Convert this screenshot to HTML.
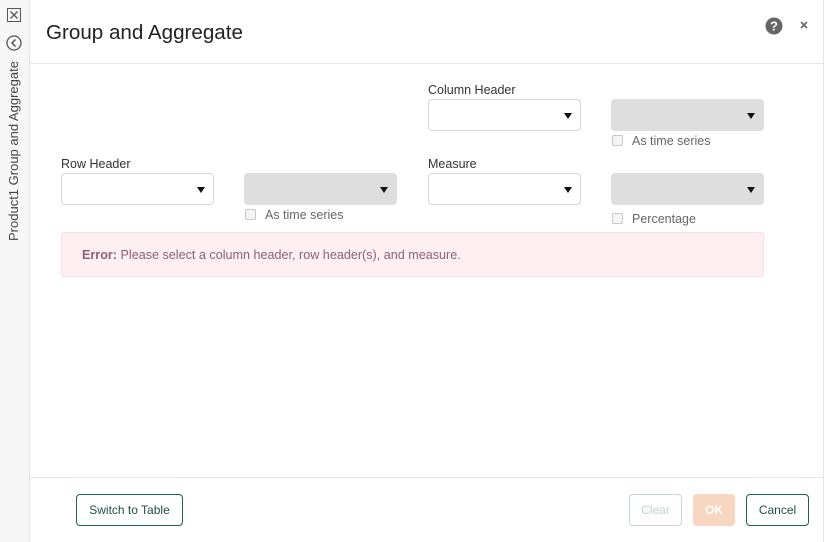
<!DOCTYPE html><html><head><style>
*{box-sizing:border-box;margin:0;padding:0}
body{width:830px;height:542px;position:relative;background:#fff;font-family:"Liberation Sans",sans-serif;overflow:hidden;color:#333}
.a{position:absolute}
.sel{position:absolute;width:153px;height:32px;border:1px solid #d6d6d6;border-radius:4px;background:#fff}
.sel.g{background:#dedede;border-color:#dedede}
.sel:after{content:"";position:absolute;right:8px;top:13px;border-left:4.5px solid transparent;border-right:4.5px solid transparent;border-top:6px solid #111}
.lbl{position:absolute;font-size:12.5px;color:#333}
.cb{position:absolute;width:11px;height:11px;border:1px solid #c8c8c8;border-radius:2px;background:#f4f4f4}
.ct{position:absolute;font-size:12.5px;color:#666}
.btn{position:absolute;height:32px;border-radius:4px;font-size:12px;display:flex;align-items:center;justify-content:center}
</style></head><body>
<div class="a" style="left:0;top:0;width:30px;height:542px;background:#f7f7f7;border-right:1px solid #e2e2e2"></div>
<svg class="a" style="left:7px;top:8px" width="15" height="15" viewBox="0 0 15 15"><rect x="0.5" y="0.5" width="13" height="13" fill="none" stroke="#555"/><path d="M3.5 3.5L10.5 10.5M10.5 3.5L3.5 10.5" stroke="#555" stroke-width="1.3"/></svg>
<svg class="a" style="left:6px;top:35px" width="16" height="16" viewBox="0 0 16 16"><circle cx="8" cy="8" r="7" fill="none" stroke="#555" stroke-width="1.3"/><path d="M9.5 4.5L6 8l3.5 3.5" fill="none" stroke="#555" stroke-width="1.5"/></svg>
<div class="a" style="left:6px;top:241px;transform:rotate(-90deg);transform-origin:0 0;font-size:13px;color:#444;white-space:nowrap;width:185px">Product1 Group and Aggregate</div>
<div class="a" style="left:823px;top:0;width:1px;height:542px;background:#e6e6e6"></div>
<div class="a" style="left:46px;top:21px;font-size:20.6px;color:#222">Group and Aggregate</div>
<svg class="a" style="left:765px;top:17px" width="18" height="18" viewBox="0 0 18 18"><circle cx="9" cy="9" r="8.5" fill="#666"/><text x="9" y="13.5" font-size="13" font-weight="bold" fill="#fff" text-anchor="middle" font-family="Liberation Sans">?</text></svg>
<svg class="a" style="left:800px;top:21px" width="8" height="8" viewBox="0 0 8 8"><path d="M1 1L7 7M7 1L1 7" stroke="#666" stroke-width="1.6"/></svg>
<div class="a" style="left:30px;top:63px;width:793px;height:1px;background:#e6e6e6"></div>
<div class="lbl" style="left:428px;top:83px">Column Header</div>
<div class="sel" style="left:428px;top:99px"></div>
<div class="sel g" style="left:611px;top:99px"></div>
<div class="cb" style="left:612px;top:135px"></div><div class="ct" style="left:632px;top:134px">As time series</div>
<div class="lbl" style="left:61px;top:157px">Row Header</div>
<div class="lbl" style="left:428px;top:157px">Measure</div>
<div class="sel" style="left:61px;top:173px"></div>
<div class="sel g" style="left:244px;top:173px"></div>
<div class="sel" style="left:428px;top:173px"></div>
<div class="sel g" style="left:611px;top:173px"></div>
<div class="cb" style="left:245px;top:209px"></div><div class="ct" style="left:265px;top:208px">As time series</div>
<div class="cb" style="left:612px;top:213px"></div><div class="ct" style="left:632px;top:212px">Percentage</div>
<div class="a" style="left:61px;top:232px;width:703px;height:45px;background:#fdeff2;border:1px solid #f7e1e5;border-radius:3px;font-size:12.6px;color:#8a6470;padding:15px 0 0 20px"><b>Error:</b> Please select a column header, row header(s), and measure.</div>
<div class="a" style="left:30px;top:477px;width:793px;height:1px;background:#e6e6e6"></div>
<div class="btn" style="left:76px;top:494px;width:107px;border:1px solid #1f5f55;color:#1f4f48">Switch to Table</div>
<div class="btn" style="left:629px;top:494px;width:53px;border:1px solid #c5d8d4;color:#c2d2cf">Clear</div>
<div class="btn" style="left:693px;top:494px;width:42px;background:#f7d6c2;color:#fff;font-weight:bold">OK</div>
<div class="btn" style="left:746px;top:494px;width:63px;border:1px solid #1f5f55;color:#1f4f48">Cancel</div>
</body></html>
